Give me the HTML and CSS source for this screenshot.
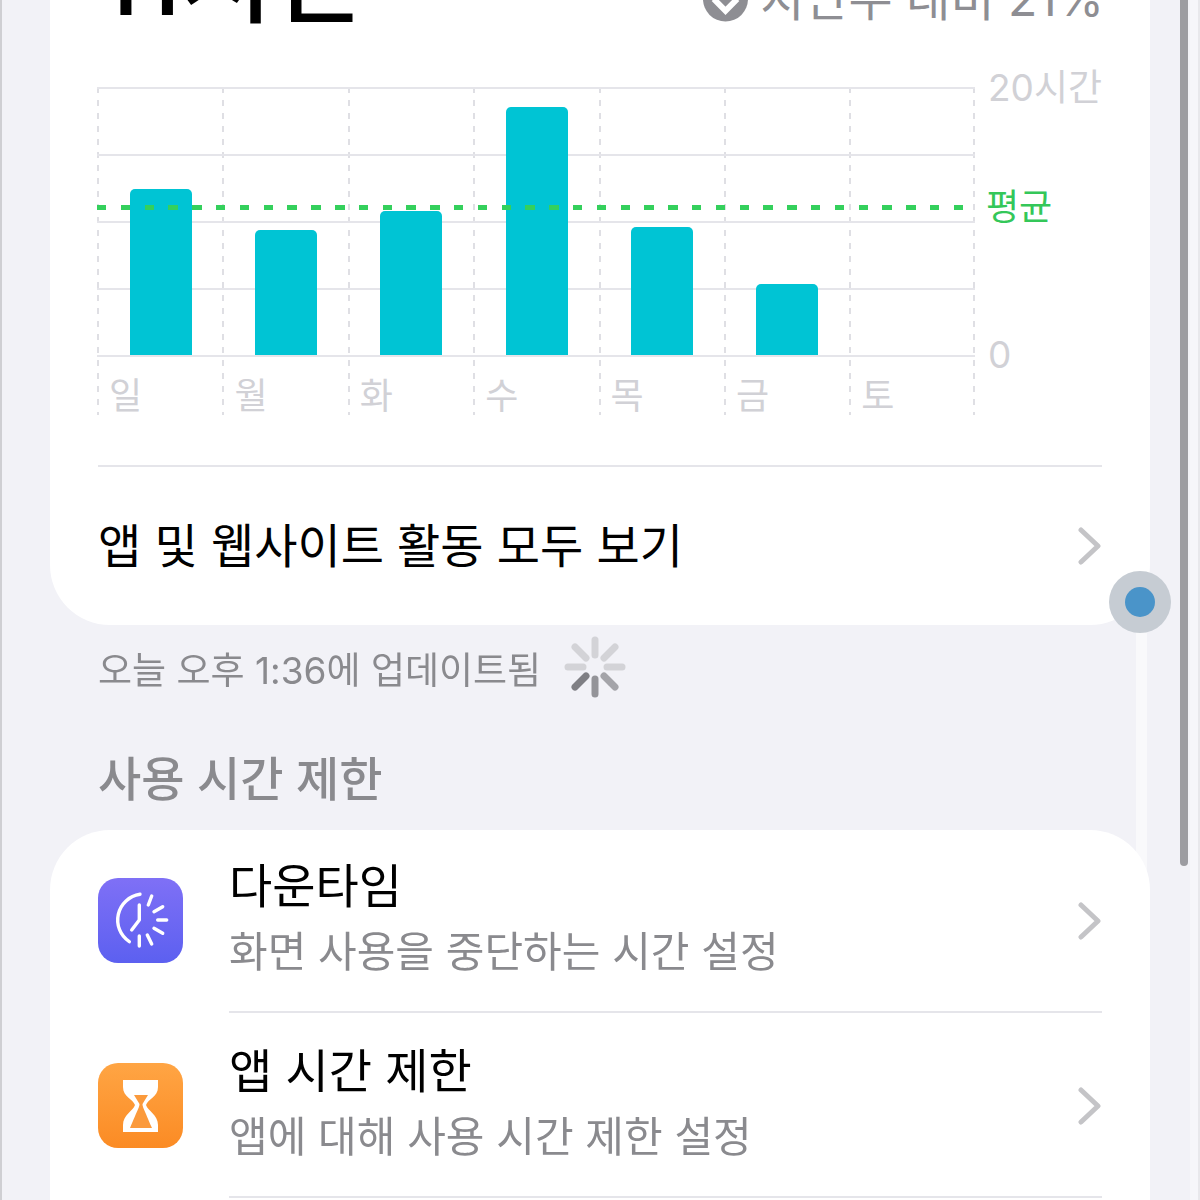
FILE: index.html
```html
<!DOCTYPE html>
<html lang="ko">
<head>
  <meta charset="UTF-8" />
  <title>스크린 타임</title>
  <link rel="stylesheet" href="styles.css">
</head>
<body>

  <div class="page">
    <!-- 주간 활동 카드 -->
    <section class="card card-top">
      <div class="summary">
        <h1 class="total">11시간</h1>
        <div class="compare">
          <svg class="compare-icon" width="45" height="46" viewBox="0 0 46 46">
            <circle cx="23" cy="23" r="23" fill="#8e8e93" />
            <path d="M11 23 L23 35 L35 23" fill="none" stroke="#fff" stroke-width="6" />
          </svg>
          <span>지난주 대비 21%</span>
        </div>
      </div>

      <div class="chart">
        <div class="plot">
          <div class="col"><div class="area"><div class="bar" style="height:166px"></div></div><span class="day">일</span></div>
          <div class="col"><div class="area"><div class="bar" style="height:125px"></div></div><span class="day">월</span></div>
          <div class="col"><div class="area"><div class="bar" style="height:144px"></div></div><span class="day">화</span></div>
          <div class="col"><div class="area"><div class="bar" style="height:248px"></div></div><span class="day">수</span></div>
          <div class="col"><div class="area"><div class="bar" style="height:128px"></div></div><span class="day">목</span></div>
          <div class="col"><div class="area"><div class="bar" style="height:71px"></div></div><span class="day">금</span></div>
          <div class="col col-last"><div class="area"></div><span class="day">토</span></div>
          <div class="avg-line"></div>
        </div>
        <div class="scale">
          <span class="scale-max">20시간</span>
          <span class="scale-avg">평균</span>
          <span class="scale-min">0</span>
        </div>
      </div>

      <a class="more">
        <span>앱 및 웹사이트 활동 모두 보기</span>
        <svg class="chevron" width="24" height="38" viewBox="0 0 24 38"><path d="M3 3 L20 19 L3 35" /></svg>
      </a>
    </section>

    <div class="updated">
      <span class="updated-text">오늘 오후 1:36에 업데이트됨</span>
      <svg class="spinner" width="62" height="62" viewBox="-31 -31 62 62">
        <g stroke-width="7" stroke-linecap="round">
          <line y1="-12" y2="-27" stroke="#d3d3d7" />
          <line x1="9" y1="-9" x2="20" y2="-20" stroke="#d3d3d7" />
          <line x1="12" x2="27" stroke="#d3d3d7" />
          <line x1="9" y1="9" x2="20" y2="20" stroke="#a4a4a9" />
          <line y1="12" y2="27" stroke="#949499" />
          <line x1="-9" y1="9" x2="-20" y2="20" stroke="#7f7f84" />
          <line x1="-12" x2="-27" stroke="#d3d3d7" />
          <line x1="-9" y1="-9" x2="-20" y2="-20" stroke="#d3d3d7" />
        </g>
      </svg>
    </div>

    <h2 class="section-title">사용 시간 제한</h2>

    <!-- 사용 시간 제한 목록 -->
    <section class="card card-list">
      <div class="item">
        <svg class="app-icon" width="85" height="85" viewBox="0 0 85 85">
          <defs>
            <linearGradient id="purple" x1="0" y1="0" x2="0" y2="1">
              <stop offset="0" stop-color="#7f70f6" />
              <stop offset="1" stop-color="#5c60f0" />
            </linearGradient>
          </defs>
          <rect width="85" height="85" rx="20" fill="url(#purple)" />
          <g fill="none" stroke="#fff" stroke-width="3.4" stroke-linecap="round" stroke-linejoin="round">
            <path d="M42 16.3 A26 26 0 0 0 31.3 63.7" />
            <path d="M41.3 27 V42 L33.7 52" />
            <path d="M53.7 18 L50.3 27 M64.7 28.7 L56 33.7 M68.7 42 H59.7 M64.7 55.3 L56 50.3 M53.7 66 L49.3 57 M41.3 68 V58" />
          </g>
        </svg>
        <div class="item-text">
          <div class="item-title">다운타임</div>
          <div class="item-sub">화면 사용을 중단하는 시간 설정</div>
        </div>
        <svg class="chevron" width="24" height="38" viewBox="0 0 24 38"><path d="M3 3 L20 19 L3 35" /></svg>
      </div>

      <div class="item">
        <svg class="app-icon" width="85" height="85" viewBox="0 0 85 85">
          <defs>
            <linearGradient id="orange" x1="0" y1="0" x2="0" y2="1">
              <stop offset="0" stop-color="#ffa544" />
              <stop offset="1" stop-color="#fb8b24" />
            </linearGradient>
          </defs>
          <rect width="85" height="85" rx="20" fill="url(#orange)" />
          <path fill="#fff" d="M25 17 H60 V24 C60 34 50 36 48 42 C50 48 60 52 60 62 V69 H25 V62 C25 52 35 48 37 42 C35 36 25 34 25 24 Z" />
          <path fill="#fb9a3c" d="M36 32 H50 L44.5 41 C44.5 44 46 46 54 65 H32 C40 46 41.5 44 41.5 41 Z" />
        </svg>
        <div class="item-text">
          <div class="item-title">앱 시간 제한</div>
          <div class="item-sub">앱에 대해 사용 시간 제한 설정</div>
        </div>
        <svg class="chevron" width="24" height="38" viewBox="0 0 24 38"><path d="M3 3 L20 19 L3 35" /></svg>
      </div>
    </section>
  </div>

  <!-- 화면 위에 겹쳐진 요소 -->
  <div class="edge-left"></div>
  <div class="edge-right"></div>
  <div class="track"></div>
  <div class="scrubber"><div class="scrubber-dot"></div></div>
  <div class="scrollbar"></div>

</body>
</html>
```

FILE: styles.css
```css
* {
  box-sizing: border-box;
}

html, body {
  margin: 0;
  height: 1200px;
  overflow: hidden;
}

body {
  font-family: Inter, "Noto Sans CJK KR", sans-serif;
  background: #f2f2f7;
  color: #000;
  position: relative;
}

.page {
  height: 1200px;
  overflow: hidden;
  filter: blur(0.6px);
}

.card {
  background: #fff;
  margin: 0 50px;
  padding: 0 48px;
}

.card-top {
  margin-top: -100px;
  height: 725px;
  border-radius: 0 0 60px 60px;
}

.summary {
  height: 187px;
  display: flex;
  justify-content: space-between;
  align-items: flex-start;
  padding-top: 36px;
}

.total {
  margin: -5px 0 0 0;
  font-size: 100px;
  font-weight: 500;
  line-height: 96px;
}

.compare {
  display: flex;
  align-items: center;
  gap: 12px;
  margin: 33px -2px 0 0;
  font-size: 48px;
  line-height: 60px;
  color: #8e8e93;
}

.chart {
  display: flex;
  height: 328px;
}

.plot {
  position: relative;
  display: flex;
  width: 878px;
  height: 328px;
  margin-left: -1px;
}

.col {
  width: 125.4px;
  height: 328px;
  display: flex;
  flex-direction: column;
  background: repeating-linear-gradient(to bottom, #dfdfe4 0 6px, transparent 6px 13px) left top / 2px 100% no-repeat;
}

.col-last {
  background:
    repeating-linear-gradient(to bottom, #dfdfe4 0 6px, transparent 6px 13px) left top / 2px 100% no-repeat,
    repeating-linear-gradient(to bottom, #dfdfe4 0 6px, transparent 6px 13px) right top / 2px 100% no-repeat;
}

.area {
  flex: none;
  height: 270px;
  padding-left: 32.5px;
  display: flex;
  align-items: flex-end;
  background: repeating-linear-gradient(to bottom, #e5e5ea 0 2px, transparent 2px 67px);
}

.bar {
  width: 62px;
  margin-bottom: 2px;
  background: #00c4d4;
  border-radius: 5px 5px 0 0;
}

.day {
  margin: 14px 0 0 12px;
  font-size: 36px;
  line-height: 50px;
  color: #d1d1d6;
}

.avg-line {
  position: absolute;
  left: 0;
  top: 118px;
  width: 866px;
  height: 5px;
  background: repeating-linear-gradient(to right, #34d05c 0 9.5px, transparent 9.5px 23.8px);
}

.scale {
  position: relative;
  flex: 1;
  font-size: 37px;
  color: #d1d1d6;
}

.scale span {
  position: absolute;
  left: 13px;
  line-height: 50px;
  white-space: nowrap;
}

.scale-max {
  top: -24px;
}

.scale span.scale-avg {
  left: 11px;
  top: 95px;
  color: #34c759;
  font-size: 36px;
}

.scale-min {
  top: 243px;
}

.more {
  margin-top: 50px;
  border-top: 2px solid #e5e5ea;
  height: 160px;
  display: flex;
  align-items: center;
  justify-content: space-between;
  font-size: 47px;
  line-height: 60px;
}

.chevron {
  flex: none;
}

.chevron path {
  fill: none;
  stroke: #c4c4c7;
  stroke-width: 5;
  stroke-linecap: round;
  stroke-linejoin: round;
}

.updated {
  display: flex;
  align-items: center;
  gap: 23px;
  height: 84px;
  margin: 0 98px;
  font-size: 37px;
  color: #8a8a8e;
}

.updated-text {
  padding-top: 2px;
}

.spinner {
  margin-top: -1px;
}

.section-title {
  margin: 40px 98px 0;
  font-size: 47px;
  font-weight: 500;
  line-height: 60px;
  color: #8a8a8e;
}

.card-list {
  display: flow-root;
  margin-top: 21px;
  height: 500px;
  border-radius: 60px 60px 0 0;
}

.item {
  display: flex;
  align-items: center;
  height: 185px;
  position: relative;
}

.item:first-child {
  margin-top: -2px;
}

.item::after {
  content: "";
  position: absolute;
  left: 131px;
  right: 0;
  bottom: 0;
  height: 2px;
  background: #e5e5ea;
}

.app-icon {
  flex: none;
}

.item-text {
  flex: 1;
  margin-left: 46px;
  padding-bottom: 4px;
}

.item-title {
  font-size: 47px;
  line-height: 66px;
}

.item-sub {
  font-size: 42px;
  line-height: 66px;
  color: #8a8a8e;
}

.edge-left {
  position: absolute;
  left: 0;
  top: 0;
  width: 2px;
  height: 1200px;
  background: #cfcfd3;
}

.edge-right {
  position: absolute;
  left: 1190px;
  top: 0;
  width: 10px;
  height: 1200px;
  background: #f6f6fa;
  border-right: 2px solid #e8e8ec;
}

.track {
  position: absolute;
  left: 1136px;
  top: 630px;
  width: 11px;
  height: 250px;
  background: rgba(255, 255, 255, 0.5);
}

.scrubber {
  position: absolute;
  left: 1109px;
  top: 571px;
  width: 62px;
  height: 62px;
  border-radius: 50%;
  background: #c6ccd3;
  display: flex;
  align-items: center;
  justify-content: center;
}

.scrubber-dot {
  width: 30px;
  height: 30px;
  border-radius: 50%;
  background: #4a94c9;
}

.scrollbar {
  position: absolute;
  left: 1180px;
  top: 0;
  width: 8px;
  height: 866px;
  border-radius: 0 0 4px 4px;
  background: #9c9ca1;
}
```
